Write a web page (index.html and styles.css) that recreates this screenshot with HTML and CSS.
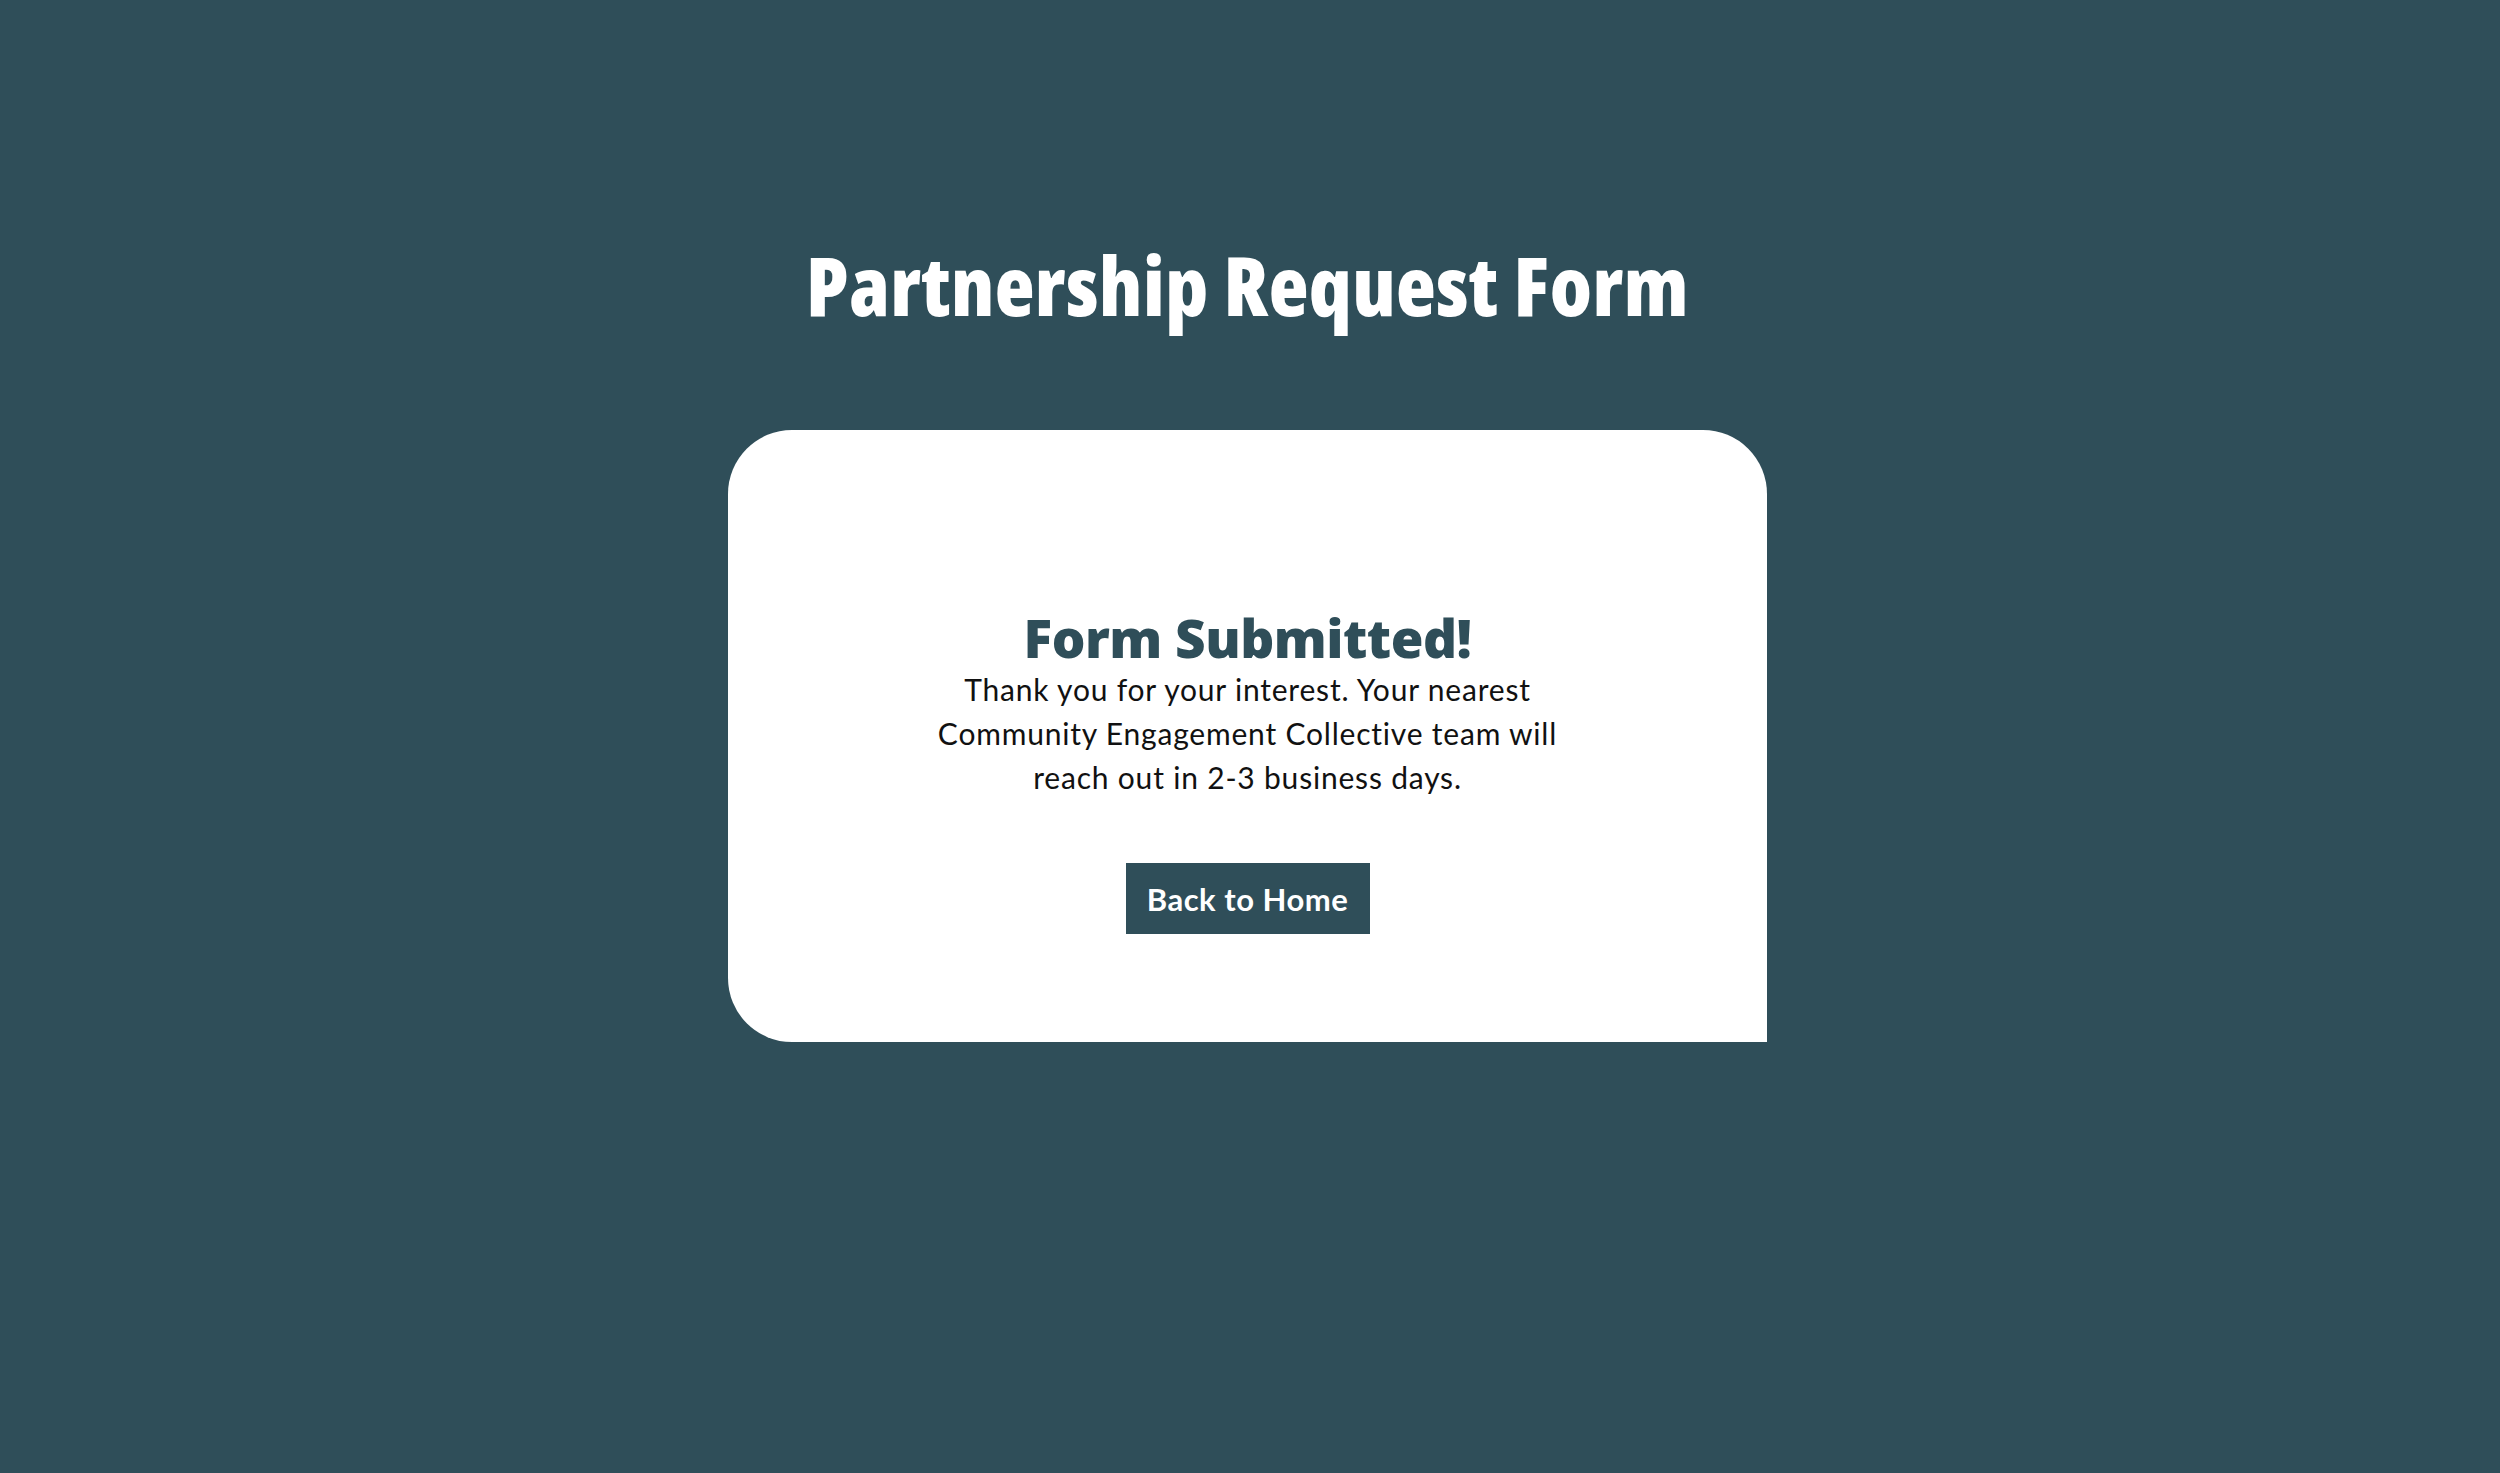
FILE: index.html
```html
<!DOCTYPE html>
<html lang="en">
<head>
  <meta charset="UTF-8">
  <meta name="viewport" content="width=device-width, initial-scale=1.0">
  <title>Partnership Request Form</title>
  <link rel="stylesheet" href="styles.css">
</head>
<body>
  <div class="page">
    <h1 class="page-title">Partnership Request Form</h1>

    <div class="success-card">
      <h2 class="success-title">Form Submitted!</h2>
      <p class="success-text">Thank you for your interest. Your nearest Community Engagement Collective team will reach out in 2-3 business days.</p>
      <button class="home-btn" onclick="location.href='index.html'">Back to Home</button>
    </div>
  </div>
</body>
</html>
```

FILE: styles.css
```css
body {
  margin: 0;
  padding: 0;
  background-color: #2f4e59;
  font-family: 'Lato', 'Open Sans', sans-serif;
  color: #111;
}

.page {
  display: flex;
  flex-direction: column;
  align-items: center;
  padding-top: 236px;
  padding-right: 5px;
}

.page-title {
  margin: 0;
  font-family: 'Open Sans', sans-serif;
  font-size: 82px;
  font-weight: 800;
  font-stretch: 75%;
  letter-spacing: 0.5px;
  line-height: 97px;
  color: #ffffff;
}

.success-card {
  width: 1039px;
  box-sizing: border-box;
  margin-top: 97px;
  padding: 179px 40px 108px;
  background-color: #ffffff;
  border-radius: 64px 64px 0 64px;
  display: flex;
  flex-direction: column;
  align-items: center;
  text-align: center;
}

.success-title {
  margin: 0;
  font-family: 'Open Sans', sans-serif;
  font-size: 53px;
  font-weight: 800;
  line-height: 1.1;
  letter-spacing: -0.5px;
  color: #2f4e59;
}

.success-text {
  max-width: 650px;
  margin: 0;
  font-size: 30px;
  font-weight: 400;
  letter-spacing: 0.8px;
  line-height: 44px;
}

.home-btn {
  margin-top: 64px;
  width: 244px;
  height: 71px;
  border: none;
  background-color: #2f4e59;
  color: #ffffff;
  font-family: 'Lato', sans-serif;
  font-size: 31px;
  font-weight: 700;
  letter-spacing: 0.5px;
  cursor: pointer;
}
```
